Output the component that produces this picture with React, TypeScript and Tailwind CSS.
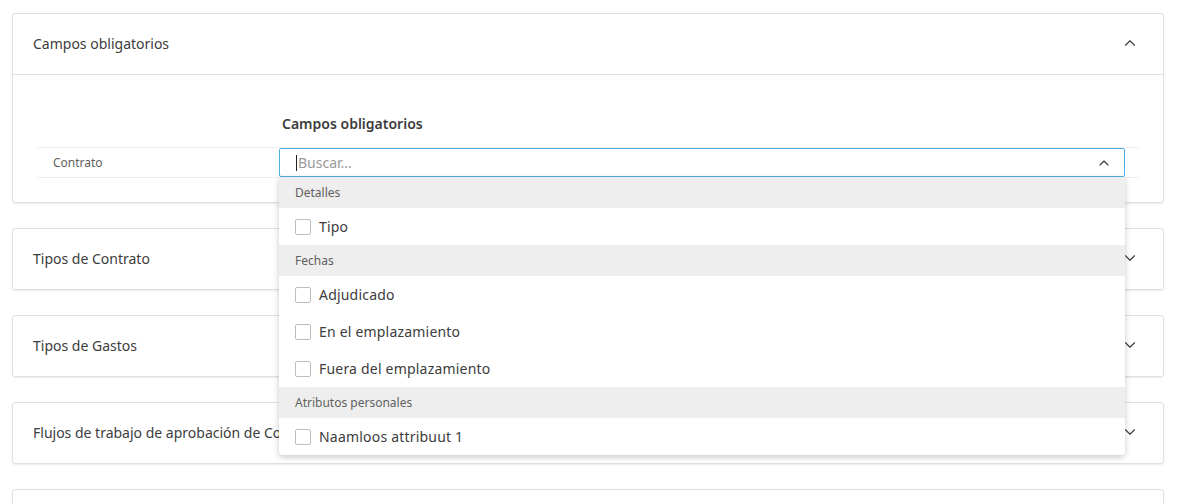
import { ChevronDown, ChevronUp } from "lucide-react";

const groups = [
  { title: "Detalles", items: ["Tipo"] },
  { title: "Fechas", items: ["Adjudicado", "En el emplazamiento", "Fuera del emplazamiento"] },
  { title: "Atributos personales", items: ["Naamloos attribuut 1"] },
];

const sections = [
  "Tipos de Contrato",
  "Tipos de Gastos",
  "Flujos de trabajo de aprobación de Contratos",
];

function Dropdown() {
  return (
    <div className="absolute left-0 right-0 top-full z-10 bg-white shadow-[0_2px_6px_rgba(0,0,0,0.22)] rounded-b-sm">
      {groups.map((g) => (
        <div key={g.title}>
          <div className="h-[31px] flex items-center px-4 bg-[#eeeeee] text-[12px] text-[#5f5f5f]">
            {g.title}
          </div>
          {g.items.map((item) => (
            <label key={item} className="h-[37px] flex items-center gap-2 px-4 text-[14px] text-[#3c3c3c] tracking-[0.2px]">
              <span className="w-4 h-4 border border-[#bdbdbd] rounded-[2px] bg-white" />
              {item}
            </label>
          ))}
        </div>
      ))}
    </div>
  );
}

export default function App() {
  return (
    <div className="bg-white pl-3 pr-4 pt-[13px] flex flex-col gap-[25px] font-['Noto_Sans','Open_Sans',sans-serif] overflow-hidden h-[504px]">
      {/* Campos obligatorios card */}
      <div className="shrink-0 border border-[#e0e0e0] rounded-[3px] shadow-[0_1px_2px_rgba(0,0,0,0.08)]">
        <div className="h-[61px] flex items-center justify-between pl-5 pr-6 pb-[2px] border-b border-[#e0e0e0]">
          <span className="text-[14px] text-[#3c3c3c]">Campos obligatorios</span>
          <ChevronUp size={18} strokeWidth={1.5} className="text-[#3c3c3c]" />
        </div>
        <div className="px-6 pt-[38px] pb-[24px]">
          <div className="flex">
            <div className="w-[242px]" />
            <div className="pl-[3px] pb-[13px] text-[14px] font-semibold text-[#3c3c3c]">Campos obligatorios</div>
          </div>
          <div className="flex items-center h-[31px] border-y border-[#eeeeee] pr-[14px]">
            <div className="w-[242px] pl-4 text-[12px] text-[#5f5f5f]">Contrato</div>
            <div className="relative flex-1">
              <div className="h-[29px] flex items-center justify-between border border-[#4db0e3] rounded-[2px] pl-4 pr-3">
                <span className="flex items-center text-[14px] text-[#9a9a9a]">
                  <span className="w-px h-4 bg-[#222] mr-px" />
                  Buscar...
                </span>
                <ChevronUp size={16} strokeWidth={1.75} className="text-[#3c3c3c]" />
              </div>
              <Dropdown />
            </div>
          </div>
        </div>
      </div>

      {sections.map((s) => (
        <div key={s} className="border border-[#e0e0e0] rounded-[3px] shadow-[0_1px_2px_rgba(0,0,0,0.08)] h-[62px] shrink-0 flex items-center justify-between pl-5 pr-6 pb-[2px]">
          <span className="text-[14px] text-[#3c3c3c]">{s}</span>
          <ChevronDown size={18} strokeWidth={1.5} className="text-[#3c3c3c]" />
        </div>
      ))}
      <div className="border border-[#e0e0e0] rounded-[3px] shadow-[0_1px_2px_rgba(0,0,0,0.08)] h-[62px] shrink-0" />
    </div>
  );
}
